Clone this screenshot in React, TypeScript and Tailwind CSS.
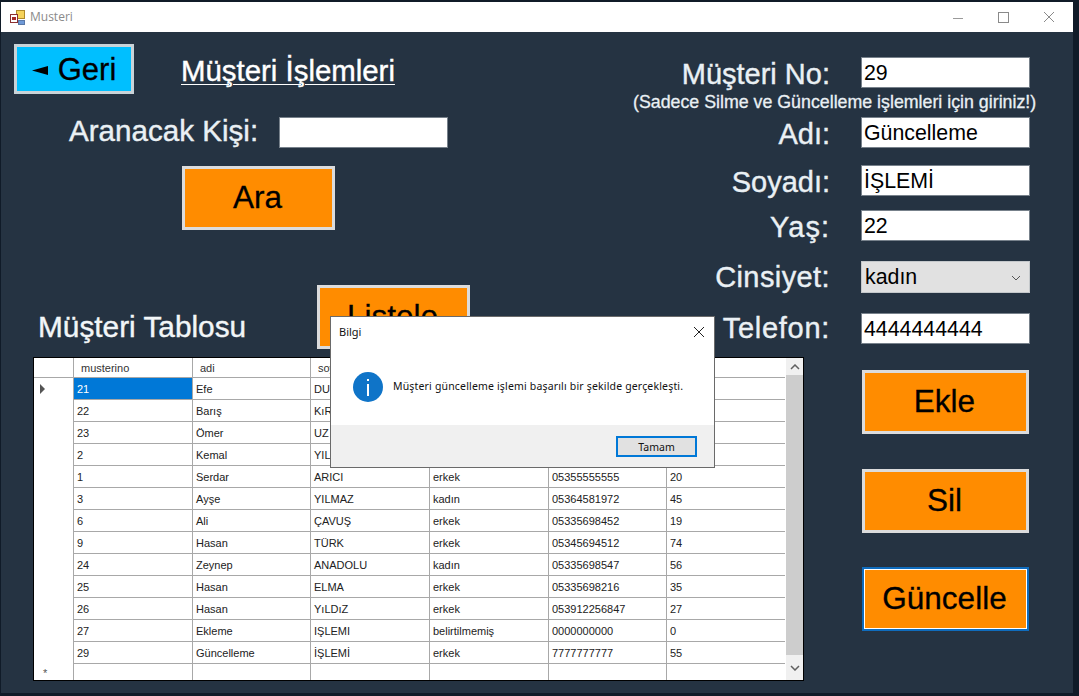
import React from "react";

const rows = [
  ["21", "Efe", "DU", "", "", ""],
  ["22", "Barış", "KıR", "", "", ""],
  ["23", "Ömer", "UZ", "", "", ""],
  ["2", "Kemal", "YIL", "", "", ""],
  ["1", "Serdar", "ARICI", "erkek", "05355555555", "20"],
  ["3", "Ayşe", "YILMAZ", "kadın", "05364581972", "45"],
  ["6", "Ali", "ÇAVUŞ", "erkek", "05335698452", "19"],
  ["9", "Hasan", "TÜRK", "erkek", "05345694512", "74"],
  ["24", "Zeynep", "ANADOLU", "kadın", "05335698547", "56"],
  ["25", "Hasan", "ELMA", "erkek", "05335698216", "35"],
  ["26", "Hasan", "YıLDıZ", "erkek", "053912256847", "27"],
  ["27", "Ekleme", "IŞLEMI", "belirtilmemiş", "0000000000", "0"],
  ["29", "Güncelleme", "İŞLEMİ", "erkek", "7777777777", "55"],
];
const headers = ["musterino", "adi", "soy", "", "", ""];
const gridCols = "grid grid-cols-[40px_119px_118px_119px_119px_118px_118px]";

function Btn({ children, className = "" }: { children: React.ReactNode; className?: string }) {
  return (
    <div className={`flex items-center justify-center pr-[2px] bg-[#ff8c00] border-[3px] border-[#dcdcdc] text-black text-[31.5px] [-webkit-text-stroke:0.3px_#000000] ${className}`}>
      {children}
    </div>
  );
}

function Field({ value, className = "" }: { value?: string; className?: string }) {
  return (
    <div className={`flex items-center w-[169px] h-[31px] bg-white border border-[#77818b] pl-[2px] pt-[2px] text-black text-[21.33px] leading-none ${className}`}>
      {value}
    </div>
  );
}

function FormRow({ label, className = "", labelClass = "pt-[3px]", children }: { label: string; className?: string; labelClass?: string; children: React.ReactNode }) {
  return (
    <div className={`flex items-center ${className}`}>
      <div className={`w-[230px] h-[31px] flex items-center justify-end text-[29px] text-[#eaf0f4] leading-none whitespace-nowrap [-webkit-text-stroke:0.4px_#eaf0f4] ${labelClass}`}>{label}</div>
      <div className="ml-[31px]">{children}</div>
    </div>
  );
}

export default function App() {
  return (
    <div className="relative w-[1079px] h-[696px] overflow-hidden bg-[#101b28] pt-[2px] pl-[1px] font-['Liberation_Sans',Arial,sans-serif]">
      <div className="w-[1072px] h-[691px] flex flex-col bg-[#253342]">
        {/* title bar */}
        <div className="flex items-center h-[30px] shrink-0 bg-white pl-[9px]">
          <svg width="15" height="15" viewBox="0 0 15 15" className="shrink-0">
            <rect x="6.5" y="0.5" width="8" height="8" fill="#f5d25a" stroke="#b08a2a" />
            <rect x="0.5" y="4.5" width="7" height="8" fill="#ffffff" stroke="#8c3030" />
            <rect x="2" y="7" width="4" height="3" fill="#a52a2a" />
            <rect x="8.5" y="10.5" width="6" height="4" fill="#6f9ad8" stroke="#5a78a8" />
          </svg>
          <span className="ml-[5px] text-[12px] text-[#8a8a8a] font-['Open_Sans',sans-serif]">Musteri</span>
          <div className="ml-auto flex items-center pr-[2px]">
            <svg width="45" height="30" viewBox="0 0 45 30"><path d="M18 16.5h10" stroke="#9a9a9a" fill="none" /></svg>
            <svg width="46" height="30" viewBox="0 0 46 30"><rect x="18.5" y="10.5" width="10" height="10" stroke="#8a8a8a" fill="none" /></svg>
            <svg width="45" height="30" viewBox="0 0 45 30"><path d="M18 10l10 10M28 10L18 20" stroke="#8a8a8a" fill="none" /></svg>
          </div>
        </div>

        {/* top area */}
        <div className="flex h-[325px] shrink-0">
          <div className="w-[599px] shrink-0 flex flex-col">
            <div className="flex items-center mt-[12px] ml-[13px]">
              <div className="flex items-center justify-center w-[120px] h-[50px] bg-[#00bfff] border-[3px] border-[#c9d3d8] text-black text-[31px] leading-none [-webkit-text-stroke:0.3px_#000000]">
                <svg width="16" height="9" viewBox="0 0 16 9" className="mr-[10px] mt-[2px]"><path d="M0 4.5L16 0v9z" fill="#000" /></svg>
                Geri
              </div>
              <div className="ml-[47px] mt-[4px] text-[29.4px] leading-none text-white underline underline-offset-[3px] decoration-[1px] [-webkit-text-stroke:0.4px_#ffffff] whitespace-nowrap">Müşteri İşlemleri</div>
            </div>
            <div className="flex items-center mt-[23px] ml-[68px]">
              <div className="w-[210px] h-[31px] flex items-center pb-[3px] text-[29.6px] leading-none text-[#eaf0f4] [-webkit-text-stroke:0.4px_#eaf0f4] whitespace-nowrap">Aranacak Kişi:</div>
              <Field />
            </div>
            <Btn className="mt-[18px] ml-[181px] w-[153px] h-[64px]">Ara</Btn>
            <div className="flex items-end mt-[55px]">
              <div className="ml-[37px] w-[279px] mb-[7px] text-[29.8px] leading-none text-[#f2f6f8] [-webkit-text-stroke:0.4px_#f2f6f8] whitespace-nowrap">Müşteri Tablosu</div>
              <Btn className="w-[153px] h-[64px]">Listele</Btn>
            </div>
          </div>

          <div className="flex-1 flex flex-col">
            <FormRow label="Müşteri No:" className="mt-[25px]"><Field value="29" /></FormRow>
            <div className="h-[29px] flex items-center ml-[33px] text-[17.8px] leading-none text-[#eaf0f4] [-webkit-text-stroke:0.3px_#eaf0f4] whitespace-nowrap">(Sadece Silme ve Güncelleme işlemleri için giriniz!)</div>
            <FormRow label="Adı:"><Field value="Güncelleme" /></FormRow>
            <FormRow label="Soyadı:" className="mt-[17px]"><Field value="İŞLEMİ" /></FormRow>
            <FormRow label="Yaş:" className="mt-[14px]" labelClass="pt-[3px] tracking-[1px]"><Field value="22" /></FormRow>
            <FormRow label="Cinsiyet:" className="mt-[20px]" labelClass="tracking-[0.4px]">
              <div className="flex items-center justify-between w-[169px] h-[32px] bg-[#e1e1e1] border border-[#c4c8cb] pl-[3px] pr-[8px] pt-[1px] text-[21.33px] leading-none text-black">
                kadın
                <svg width="10" height="6" viewBox="0 0 10 6"><path d="M1 1l4 4 4-4" stroke="#555" fill="none" /></svg>
              </div>
            </FormRow>
            <FormRow label="Telefon:" className="mt-[20px]" labelClass="pb-[1px] tracking-[0.7px]"><Field value="4444444444" /></FormRow>
          </div>
        </div>

        {/* bottom area */}
        <div className="flex flex-1">
          <div className="ml-[32px] w-[771px] h-[324px] flex border border-black bg-white text-[11px] leading-none text-[#222]">
            <div className="w-[752px] shrink-0 flex flex-col">
              <div className={`${gridCols} h-[20px] shrink-0`}>
                <div className="border-r border-b border-[#a8a8a8]" />
                {headers.map((h, i) => (
                  <div key={i} className="flex items-center pl-[7px] pt-[1px] border-r border-b border-[#a8a8a8] last:border-r-0 text-[#333]">{h}</div>
                ))}
              </div>
              {rows.map((r, i) => (
                <div key={i} className={`${gridCols} h-[22px] shrink-0`}>
                  <div className="flex items-center pl-[6px] border-r border-[#a8a8a8]">
                    {i === 0 && (
                      <svg width="5" height="10" viewBox="0 0 5 10"><path d="M0 0l5 5-5 5z" fill="#555" /></svg>
                    )}
                  </div>
                  {r.map((c, j) => (
                    <div
                      key={j}
                      className={`flex items-center pl-[3px] pt-[2px] border-r border-b border-[#a8a8a8] last:border-r-0 whitespace-nowrap overflow-hidden ${
                        i === 0 && j === 0 ? "bg-[#0078d7] text-white" : ""
                      }`}
                    >
                      {c}
                    </div>
                  ))}
                </div>
              ))}
              <div className={`${gridCols} flex-1 min-h-0 overflow-hidden`}>
                <div className="flex items-start pl-[9px] pt-[4px] border-r border-[#a8a8a8] text-[#555]">*</div>
                {headers.map((h, i) => (
                  <div key={i} className="border-r border-[#a8a8a8] last:border-r-0" />
                ))}
              </div>
            </div>
            <div className="flex-1 flex flex-col bg-[#f0f0f0]">
              <div className="h-[17px] flex items-center justify-center">
                <svg width="10" height="6" viewBox="0 0 10 6"><path d="M1 5l4-4 4 4" stroke="#606060" strokeWidth="1.5" fill="none" /></svg>
              </div>
              <div className="h-[280px] bg-[#cdcdcd]" />
              <div className="flex-1 flex items-center justify-center">
                <svg width="10" height="6" viewBox="0 0 10 6"><path d="M1 1l4 4 4-4" stroke="#606060" strokeWidth="1.5" fill="none" /></svg>
              </div>
            </div>
          </div>
          <div className="ml-[58px] mt-[13px] w-[167px] flex flex-col">
            <Btn className="w-[167px] h-[64px]">Ekle</Btn>
            <Btn className="w-[167px] h-[64px] mt-[35px]">Sil</Btn>
            <div className="mt-[34px] w-[167px] h-[64px] border-2 border-[#0f6cbd]">
              <Btn className="w-full h-full !border-[1px] !border-white">Güncelle</Btn>
            </div>
          </div>
        </div>
      </div>

      {/* message box */}
      <div className="absolute left-[330px] top-[316px] w-[385px] h-[152px] flex flex-col bg-white border border-[#6a6a6a] font-['Noto_Sans',sans-serif] text-[#111]">
        <div className="flex items-center justify-between h-[30px] pl-[8px] pr-[9px] text-[11px]">
          <span>Bilgi</span>
          <svg width="12" height="12" viewBox="0 0 12 12"><path d="M1 1l10 10M11 1L1 11" stroke="#222" fill="none" /></svg>
        </div>
        <div className="flex-1 flex items-center pl-[22px] pt-[2px]">
          <svg width="30" height="30" viewBox="0 0 30 30" className="shrink-0">
            <circle cx="15" cy="15" r="15" fill="#0f74c8" />
            <rect x="14" y="12" width="2" height="12" fill="#fff" />
            <rect x="14" y="7" width="2" height="2" fill="#fff" />
          </svg>
          <span className="ml-[10px] text-[10.5px] tracking-[0.17px] whitespace-nowrap">Müşteri güncelleme işlemi başarılı bir şekilde gerçekleşti.</span>
        </div>
        <div className="h-[42px] flex items-center justify-end bg-[#f0f0f0] pr-[17px]">
          <div className="flex items-center justify-center w-[81px] h-[21px] pt-[3px] bg-[#e1e1e1] border-2 border-[#0078d7] text-[10.5px]">Tamam</div>
        </div>
      </div>
    </div>
  );
}
